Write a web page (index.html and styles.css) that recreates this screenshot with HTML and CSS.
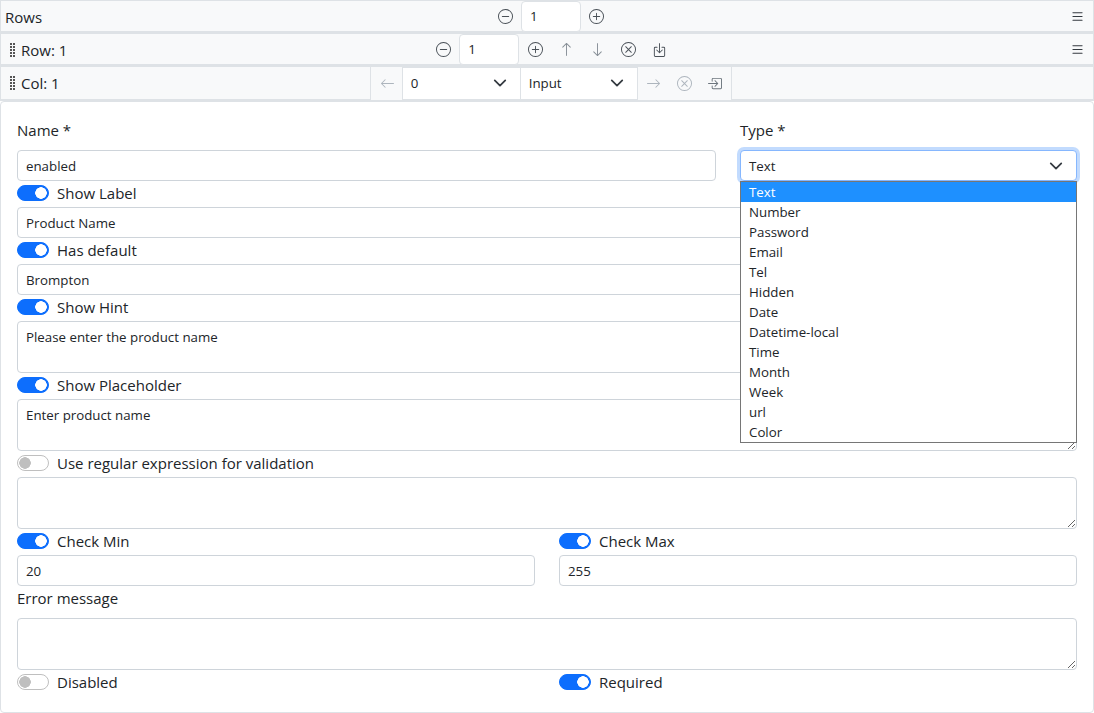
FILE: index.html
```html
<!DOCTYPE html>
<html lang="en">
<head>
    <meta charset="UTF-8">
    <meta name="viewport" content="width=device-width, initial-scale=1.0">
    <title>Form builder</title>
    <link rel="stylesheet" href="styles.css">
</head>
<body>
    <svg class="sprite" width="0" height="0">
        <defs>
            <g id="ring"><path d="M8 15A7 7 0 1 1 8 1a7 7 0 0 1 0 14zm0 1A8 8 0 1 0 8 0a8 8 0 0 0 0 16z"/></g>
            <symbol id="i-dash" viewBox="0 0 16 16"><use href="#ring"/><path d="M4 8a.5.5 0 0 1 .5-.5h7a.5.5 0 0 1 0 1h-7A.5.5 0 0 1 4 8z"/></symbol>
            <symbol id="i-plus" viewBox="0 0 16 16"><use href="#ring"/><path d="M8 4a.5.5 0 0 1 .5.5v3h3a.5.5 0 0 1 0 1h-3v3a.5.5 0 0 1-1 0v-3h-3a.5.5 0 0 1 0-1h3v-3A.5.5 0 0 1 8 4z"/></symbol>
            <symbol id="i-x" viewBox="0 0 16 16"><use href="#ring"/><path d="M4.646 4.646a.5.5 0 0 1 .708 0L8 7.293l2.646-2.647a.5.5 0 0 1 .708.708L8.707 8l2.647 2.646a.5.5 0 0 1-.708.708L8 8.707l-2.646 2.647a.5.5 0 0 1-.708-.708L7.293 8 4.646 5.354a.5.5 0 0 1 0-.708z"/></symbol>
            <symbol id="i-up" viewBox="0 0 16 16"><path d="M8 15a.5.5 0 0 0 .5-.5V2.707l3.146 3.147a.5.5 0 0 0 .708-.708l-4-4a.5.5 0 0 0-.708 0l-4 4a.5.5 0 1 0 .708.708L7.5 2.707V14.5a.5.5 0 0 0 .5.5z"/></symbol>
            <symbol id="i-down" viewBox="0 0 16 16"><path d="M8 1a.5.5 0 0 1 .5.5v11.793l3.146-3.147a.5.5 0 0 1 .708.708l-4 4a.5.5 0 0 1-.708 0l-4-4a.5.5 0 0 1 .708-.708L7.5 13.293V1.5A.5.5 0 0 1 8 1z"/></symbol>
            <symbol id="i-left" viewBox="0 0 16 16"><path d="M15 8a.5.5 0 0 0-.5-.5H2.707l3.147-3.146a.5.5 0 1 0-.708-.708l-4 4a.5.5 0 0 0 0 .708l4 4a.5.5 0 0 0 .708-.708L2.707 8.5H14.5A.5.5 0 0 0 15 8z"/></symbol>
            <symbol id="i-right" viewBox="0 0 16 16"><path d="M1 8a.5.5 0 0 1 .5-.5h11.793l-3.147-3.146a.5.5 0 0 1 .708-.708l4 4a.5.5 0 0 1 0 .708l-4 4a.5.5 0 0 1-.708-.708L13.293 8.5H1.5A.5.5 0 0 1 1 8z"/></symbol>
            <symbol id="i-list" viewBox="0 0 16 16"><path d="M2.5 12a.5.5 0 0 1 .5-.5h10a.5.5 0 0 1 0 1H3a.5.5 0 0 1-.5-.5zm0-4a.5.5 0 0 1 .5-.5h10a.5.5 0 0 1 0 1H3a.5.5 0 0 1-.5-.5zm0-4a.5.5 0 0 1 .5-.5h10a.5.5 0 0 1 0 1H3a.5.5 0 0 1-.5-.5z"/></symbol>
            <symbol id="i-grip" viewBox="0 0 7 16"><path d="M1 1h2v2H1zM4 1h2v2H4zM1 4h2v2H1zM4 4h2v2H4zM1 7h2v2H1zM4 7h2v2H4zM1 10h2v2H1zM4 10h2v2H4zM1 13h2v2H1zM4 13h2v2H4z"/></symbol>
            <symbol id="i-into" viewBox="0 0 16 16"><path d="M6 3.5a.5.5 0 0 1 .5-.5h8a.5.5 0 0 1 .5.5v9a.5.5 0 0 1-.5.5h-8a.5.5 0 0 1-.5-.5v-2a.5.5 0 0 0-1 0v2A1.5 1.5 0 0 0 6.5 14h8a1.5 1.5 0 0 0 1.5-1.5v-9A1.5 1.5 0 0 0 14.5 2h-8A1.5 1.5 0 0 0 5 3.5v2a.5.5 0 0 0 1 0v-2z"/><path d="M11.854 8.354a.5.5 0 0 0 0-.708l-3-3a.5.5 0 1 0-.708.708L10.293 7.5H1.5a.5.5 0 0 0 0 1h8.793l-2.147 2.146a.5.5 0 0 0 .708.708l3-3z"/></symbol>
            <symbol id="i-save" viewBox="0 0 16 16"><path d="M3.5 6a.5.5 0 0 0-.5.5v8a.5.5 0 0 0 .5.5h9a.5.5 0 0 0 .5-.5v-8a.5.5 0 0 0-.5-.5h-2a.5.5 0 0 1 0-1h2A1.5 1.5 0 0 1 14 6.5v8a1.5 1.5 0 0 1-1.5 1.5h-9A1.5 1.5 0 0 1 2 14.5v-8A1.5 1.5 0 0 1 3.5 5h2a.5.5 0 0 1 0 1h-2z"/><path d="M7.646 11.854a.5.5 0 0 0 .708 0l3-3a.5.5 0 0 0-.708-.708L8.5 10.293V1.5a.5.5 0 0 0-1 0v8.793L5.354 8.146a.5.5 0 1 0-.708.708l3 3z"/></symbol>
            <symbol id="i-chev" viewBox="0 0 16 16"><path fill="none" stroke="#343a40" stroke-linecap="round" stroke-linejoin="round" stroke-width="2" d="m2 5 6 6 6-6"/></symbol>
        </defs>
    </svg>

    <div class="bar">
        <div class="bar-title">Rows</div>
        <div class="bar-tools tools-rows">
            <svg class="icon"><use href="#i-dash"/></svg>
            <input class="count" type="text" value="1">
            <svg class="icon"><use href="#i-plus"/></svg>
        </div>
        <svg class="icon menu"><use href="#i-list"/></svg>
    </div>

    <div class="bar">
        <div class="bar-title"><svg class="grip"><use href="#i-grip"/></svg>Row: 1</div>
        <div class="bar-tools tools-row">
            <svg class="icon"><use href="#i-dash"/></svg>
            <input class="count" type="text" value="1">
            <svg class="icon"><use href="#i-plus"/></svg>
            <svg class="icon faint"><use href="#i-up"/></svg>
            <svg class="icon faint"><use href="#i-down"/></svg>
            <svg class="icon"><use href="#i-x"/></svg>
            <svg class="icon"><use href="#i-save"/></svg>
        </div>
        <svg class="icon menu"><use href="#i-list"/></svg>
    </div>

    <div class="bar bar-col">
        <div class="bar-title"><svg class="grip"><use href="#i-grip"/></svg>Col: 1</div>
        <div class="col-group">
            <svg class="icon faint"><use href="#i-left"/></svg>
            <div class="mini-select"><span>0</span><svg class="chev"><use href="#i-chev"/></svg></div>
            <div class="mini-select"><span>Input</span><svg class="chev"><use href="#i-chev"/></svg></div>
            <svg class="icon faint"><use href="#i-right"/></svg>
            <svg class="icon faint"><use href="#i-x"/></svg>
            <svg class="icon dim"><use href="#i-into"/></svg>
        </div>
    </div>

    <form class="card">
        <div class="top-grid">
            <div class="field">
                <label class="lbl">Name *</label>
                <input class="ctl" type="text" value="enabled">
            </div>
            <div class="field">
                <label class="lbl">Type *</label>
                <div class="type-select">
                    <div class="ctl select-box"><span>Text</span><svg class="chev"><use href="#i-chev"/></svg></div>
                    <ul class="options">
                        <li class="picked">Text</li>
                        <li>Number</li>
                        <li>Password</li>
                        <li>Email</li>
                        <li>Tel</li>
                        <li>Hidden</li>
                        <li>Date</li>
                        <li>Datetime-local</li>
                        <li>Time</li>
                        <li>Month</li>
                        <li>Week</li>
                        <li>url</li>
                        <li>Color</li>
                    </ul>
                </div>
            </div>
        </div>

        <label class="switch"><input type="checkbox" checked>Show Label</label>
        <input class="ctl" type="text" value="Product Name">
        <label class="switch"><input type="checkbox" checked>Has default</label>
        <input class="ctl" type="text" value="Brompton">
        <label class="switch"><input type="checkbox" checked>Show Hint</label>
        <textarea class="ctl area">Please enter the product name</textarea>
        <label class="switch"><input type="checkbox" checked>Show Placeholder</label>
        <textarea class="ctl area">Enter product name</textarea>
        <label class="switch"><input type="checkbox">Use regular expression for validation</label>
        <textarea class="ctl area"></textarea>

        <div class="half-grid">
            <div>
                <label class="switch"><input type="checkbox" checked>Check Min</label>
                <input class="ctl" type="text" value="20">
            </div>
            <div>
                <label class="switch"><input type="checkbox" checked>Check Max</label>
                <input class="ctl" type="text" value="255">
            </div>
        </div>

        <label class="lbl lbl-error">Error message</label>
        <textarea class="ctl area"></textarea>

        <div class="half-grid">
            <label class="switch"><input type="checkbox">Disabled</label>
            <label class="switch"><input type="checkbox" checked>Required</label>
        </div>
    </form>
</body>
</html>
```

FILE: styles.css
```css
* {
    box-sizing: border-box;
}

html, body {
    height: 100%;
}

body {
    margin: 0;
    display: flex;
    flex-direction: column;
    overflow: hidden;
    font-family: "Open Sans", "Noto Sans", sans-serif;
    font-size: 15px;
    color: #212529;
    background: #fff;
}

.sprite {
    position: absolute;
}

/* toolbars */
.bar {
    display: flex;
    align-items: center;
    height: 33px;
    background: #f8f9fa;
    border: 1px solid #dee2e6;
    border-bottom-width: 2px;
    border-top-width: 1px;
}

.bar-col {
    height: 35px;
}

.bar-title {
    display: flex;
    align-items: center;
    padding-top: 2px;
    padding-left: 4px;
    font-size: 15px;
}

.bar-col .bar-title {
    padding-top: 0;
}

.grip {
    width: 7px;
    height: 16px;
    margin: 0 5px 0 4px;
    fill: #555;
}

.icon {
    display: block;
    width: 15px;
    height: 15px;
    flex: none;
    fill: #495057;
}

.faint {
    fill: #adb5bd;
}

.dim {
    fill: #6c757d;
}

.menu {
    margin-left: auto;
    margin-right: 8px;
    fill: #343a40;
}

.bar-tools {
    display: flex;
    align-items: center;
    height: 100%;
}

.tools-rows {
    margin-left: 456px;
}

.tools-row {
    margin-left: 369px;
}

.tools-rows .count,
.tools-row .count {
    margin: 0 8px;
}

.tools-row .count {
    margin-right: 9px;
}

.tools-row .icon:nth-of-type(n+3) {
    margin-left: 16px;
}

.tools-row .faint {
    fill: #868e96;
}

.count {
    width: 60px;
    height: 31px;
    padding: 0 8px;
    font: inherit;
    font-size: 13.3px;
    color: #212529;
    background: #fff;
    border: 1px solid #dee2e6;
    border-radius: 4px;
}

.col-group {
    display: flex;
    align-items: center;
    height: 33px;
    margin-left: 310px;
    background: #f8f9fa;
    border: 1px solid #dee2e6;
    border-bottom: 0;
    border-top: 0;
    padding-left: 9px;
    padding-right: 9px;
}

.col-group .icon:first-child {
    margin-right: 8px;
}

.col-group .mini-select + .icon {
    margin-left: 8px;
}

.col-group .icon + .icon {
    margin-left: 16px;
}

.col-group .icon + .dim {
    margin-left: 15px;
}

.mini-select {
    display: flex;
    align-items: center;
    justify-content: space-between;
    width: 119px;
    height: 33px;
    padding: 0 13px 0 8px;
    font-size: 13.3px;
    background: #fff;
    border: 1px solid #dee2e6;
    margin-left: -1px;
}

.mini-select + .mini-select {
    width: 118px;
}

.chev {
    display: block;
    width: 14px;
    height: 14px;
}

/* form */
.card {
    flex: 1;
    padding: 16px;
    background: #fff;
    border: 1px solid #dee2e6;
    border-radius: 4px;
}

.top-grid {
    display: grid;
    grid-template-columns: 699px 337px;
    gap: 24px;
}

.half-grid {
    display: grid;
    grid-template-columns: 518px 518px;
    gap: 24px;
}

.lbl {
    display: block;
    height: 24px;
    margin-bottom: 8px;
    font-size: 15px;
    line-height: 24px;
}

.ctl {
    display: block;
    width: 100%;
    height: 31px;
    padding: 0 8px;
    font: inherit;
    font-size: 13.3px;
    color: #212529;
    background: #fff;
    border: 1px solid #ced4da;
    border-radius: 4px;
}

.area {
    height: 52px;
    padding: 5px 8px;
    line-height: 21px;
}

.switch {
    display: flex;
    align-items: center;
    height: 26px;
    padding-bottom: 2px;
    font-size: 15px;
}

.switch input {
    appearance: none;
    display: block;
    width: 32px;
    height: 16px;
    margin: 0 8px 0 0;
    border: 1px solid #bfbfbf;
    border-radius: 8px;
    background: radial-gradient(circle at 7px 7px, #bfbfbf 5.5px, transparent 6px) #fff;
}

.switch input:checked {
    border-color: #0d6efd;
    background: radial-gradient(circle at 23px 7px, #fff 5.5px, transparent 6px) #0d6efd;
}

/* open select list */
.type-select {
    position: relative;
}

.select-box {
    display: flex;
    align-items: center;
    justify-content: space-between;
    padding-right: 13px;
    border-color: #86b7fe;
    box-shadow: 0 0 0 3px rgba(13, 110, 253, .25);
}

.options {
    position: absolute;
    top: 31px;
    left: 0;
    right: 0;
    z-index: 2;
    margin: 0;
    padding: 0;
    list-style: none;
    font-size: 13.3px;
    line-height: 20px;
    background: #fff;
    border: 1px solid #767676;
}

.options li {
    height: 20px;
    padding-left: 8px;
}

.options .picked {
    color: #fff;
    background: #1e90ff;
}
```
